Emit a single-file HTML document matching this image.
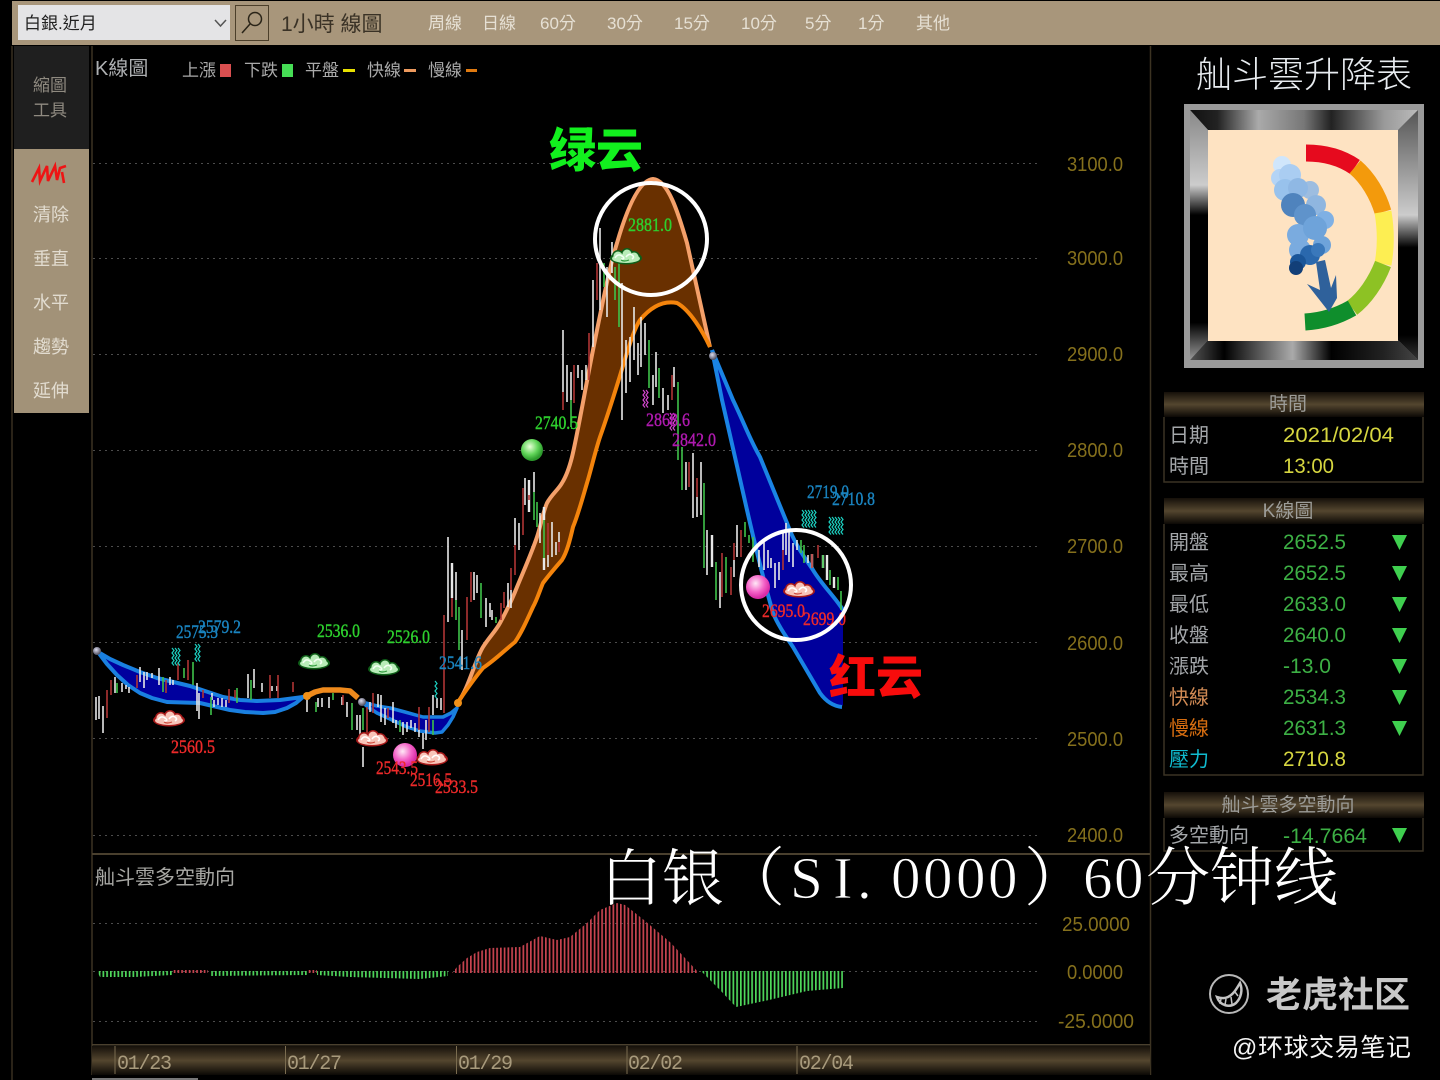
<!DOCTYPE html>
<html><head><meta charset="utf-8"><title>白银</title>
<style>
html,body{margin:0;padding:0;background:#000;width:1440px;height:1080px;overflow:hidden}
svg{display:block}
text{font-family:"Liberation Sans","Noto Sans CJK TC",sans-serif}
.a{fill:#85701c;font-size:20px}
.s{font-family:"Liberation Serif",serif;font-size:19px;stroke-width:.4px}
.l{font-size:20px;fill:#a4a7aa}
.v{font-size:21px;fill:#3db045}
.t{font-size:17px;fill:#e6e0d4}
.g{font-size:18px;fill:#e2dcd0}
.h{font-size:19px;fill:#9c9c98;text-anchor:middle}
.d{font-family:"Liberation Mono",monospace;font-size:20px;fill:#a89a7c}
</style></head><body>
<svg width="1440" height="1080" viewBox="0 0 1440 1080" xmlns="http://www.w3.org/2000/svg">
<defs>
<linearGradient id="hd" x1="0" y1="0" x2="0" y2="1"><stop offset="0" stop-color="#15100a"/><stop offset=".5" stop-color="#54462f"/><stop offset="1" stop-color="#0c0905"/></linearGradient>
<linearGradient id="ft" x1="0" y1="0" x2="1" y2="0"><stop offset="0" stop-color="#111"/><stop offset=".12" stop-color="#222"/><stop offset=".3" stop-color="#aaa"/><stop offset=".5" stop-color="#777"/><stop offset=".62" stop-color="#222"/><stop offset=".85" stop-color="#999"/><stop offset="1" stop-color="#bbb"/></linearGradient>
<linearGradient id="fb" x1="0" y1="0" x2="1" y2="0"><stop offset="0" stop-color="#555"/><stop offset=".15" stop-color="#000"/><stop offset=".45" stop-color="#aaa"/><stop offset=".62" stop-color="#000"/><stop offset=".85" stop-color="#222"/><stop offset="1" stop-color="#444"/></linearGradient>
<linearGradient id="fl" x1="0" y1="0" x2="0" y2="1"><stop offset="0" stop-color="#888"/><stop offset=".3" stop-color="#ccc"/><stop offset=".42" stop-color="#000"/><stop offset=".85" stop-color="#000"/><stop offset="1" stop-color="#999"/></linearGradient>
<linearGradient id="fr" x1="0" y1="0" x2="0" y2="1"><stop offset="0" stop-color="#555"/><stop offset=".42" stop-color="#ccc"/><stop offset=".55" stop-color="#000"/><stop offset=".9" stop-color="#000"/><stop offset="1" stop-color="#333"/></linearGradient>
<radialGradient id="bg" cx=".4" cy=".35" r=".6"><stop offset="0" stop-color="#e8ffd8"/><stop offset=".6" stop-color="#62d65a"/><stop offset="1" stop-color="#2c9a2c"/></radialGradient>
<radialGradient id="bp" cx=".4" cy=".35" r=".6"><stop offset="0" stop-color="#ffe8f6"/><stop offset=".6" stop-color="#f464c8"/><stop offset="1" stop-color="#d92ca6"/></radialGradient>
<radialGradient id="bs" cx=".4" cy=".35" r=".6"><stop offset="0" stop-color="#dde"/><stop offset="1" stop-color="#556"/></radialGradient>
<pattern id="hr" patternUnits="userSpaceOnUse" width="3.75" height="300" x="95"><rect width="1.7" height="300" fill="#c84450"/></pattern>
<pattern id="hg" patternUnits="userSpaceOnUse" width="3.75" height="300" x="95"><rect width="1.7" height="300" fill="#4fd85c"/></pattern>
<g id="cr"><g fill="#a81a1a"><ellipse cx="0" cy="1" rx="16" ry="6.500"/><circle cx="-8" cy="-1" r="6"/><circle cx="1" cy="-3" r="6"/><circle cx="8" cy="0" r="6"/></g><g fill="#f8c4b8"><ellipse cx="0" cy="1.500" rx="14" ry="4.500"/><circle cx="-8" cy="-1" r="4.500"/><circle cx="1" cy="-3" r="4.500"/><circle cx="8" cy="0" r="4.500"/></g><path d="M-11 1q3-5 7-2t-1 3M0 0q3-4 6-2t0 4" stroke="#fff" stroke-width="1.600" fill="none"/><path d="M-5 3q3 2 8 0" stroke="#d04a3c" stroke-width="1.200" fill="none"/></g>
<g id="cg"><g fill="#0e5e18"><ellipse cx="0" cy="1" rx="16" ry="6.500"/><circle cx="-8" cy="-1" r="6"/><circle cx="1" cy="-3" r="6"/><circle cx="8" cy="0" r="6"/></g><g fill="#b8ecb8"><ellipse cx="0" cy="1.500" rx="14" ry="4.500"/><circle cx="-8" cy="-1" r="4.500"/><circle cx="1" cy="-3" r="4.500"/><circle cx="8" cy="0" r="4.500"/></g><path d="M-11 1q3-5 7-2t-1 3M0 0q3-4 6-2t0 4" stroke="#f4fff4" stroke-width="1.600" fill="none"/><path d="M-5 3q3 2 8 0" stroke="#2e9a3c" stroke-width="1.200" fill="none"/></g>
<path id="wv" d="M0 0l2 2.500-2 2.500 2 2.500-2 2.500 2 2.500-2 2.500 2 2.500" fill="none" stroke-width="1.200"/>
</defs>

<rect width="1440" height="1080" fill="#000"/>

<!-- top bar -->
<rect x="12" y="1" width="1428" height="44" fill="#a8967b"/>
<rect x="18" y="5" width="212" height="35" fill="#e4e4e6"/>
<text x="24" y="29" font-size="17" fill="#222">白銀.近月</text>
<path d="M215 20l5.500 6 5.500-6" fill="none" stroke="#555" stroke-width="1.500"/>
<rect x="235.500" y="5.500" width="33" height="35" fill="#a8967b" stroke="#4c3f2a"/>
<circle cx="255" cy="19" r="6.500" fill="none" stroke="#2a2418" stroke-width="1.500"/>
<path d="M250 24l-8 9" stroke="#2a2418" stroke-width="1.500"/>
<text x="281" y="31" font-size="21" fill="#3a3226">1小時 線圖</text>
<text class="t" x="428" y="29">周線</text><text class="t" x="482" y="29">日線</text><text class="t" x="540" y="29">60分</text><text class="t" x="607" y="29">30分</text><text class="t" x="674" y="29">15分</text><text class="t" x="741" y="29">10分</text><text class="t" x="805" y="29">5分</text><text class="t" x="858" y="29">1分</text><text class="t" x="916" y="29">其他</text>

<!-- left tool panel -->
<rect x="14" y="46" width="75" height="103" fill="#1f1f1f"/>
<rect x="14" y="149" width="75" height="264" fill="#a29278"/>
<rect x="11" y="46" width="2" height="1034" fill="#2a2318"/>
<text x="33" y="91" font-size="17" fill="#8f8a80">縮圖</text>
<text x="33" y="116" font-size="17" fill="#8f8a80">工具</text>
<path d="M32 182L39 168 40 181 47 166 48 181 55 166 57 180 60 168 66 166M62 172L64 183" fill="none" stroke="#ee1414" stroke-width="2.600"/>
<text class="g" x="33" y="221">清除</text><text class="g" x="33" y="265">垂直</text><text class="g" x="33" y="309">水平</text><text class="g" x="33" y="353">趨勢</text><text class="g" x="33" y="397">延伸</text>

<!-- chart frame -->
<path d="M92 46V1075M1150.500 46V1075" stroke="#3c3322" stroke-width="1.500"/>
<path d="M93 163.500H1040M93 258.500H1040M93 354.500H1040M93 450.500H1040M93 546.500H1040M93 642.500H1040M93 738.500H1040M93 835.500H1040M93 923.500H1040M93 971.500H1040M93 1021.500H1040" stroke="#4c4c4c" stroke-dasharray="2 4"/>
<rect x="92" y="853" width="1058" height="2" fill="#4a402e"/>

<!-- legend -->
<text x="95" y="75" font-size="20" fill="#aeb0b2">K線圖</text>
<text class="t" x="182" y="76" style="fill:#aaa">上漲</text><rect x="220" y="64" width="11" height="13" fill="#d94f50"/>
<text class="t" x="244" y="76" style="fill:#aaa">下跌</text><rect x="282" y="64" width="11" height="13" fill="#46dd55"/>
<text class="t" x="305" y="76" style="fill:#aaa">平盤</text><rect x="343" y="69" width="12" height="3" fill="#e8e000"/>
<text class="t" x="367" y="76" style="fill:#aaa">快線</text><rect x="404" y="69" width="12" height="3" fill="#ee9a5e"/>
<text class="t" x="428" y="76" style="fill:#aaa">慢線</text><rect x="466" y="69" width="11" height="3" fill="#e07a10"/>

<!-- clouds ribbons -->
<path d="M98 652L110 659 123 665 140 672 157 678 190 686 223 697 240 700 257 701 280 700 303 697 296 703 287 708 275 712 263 713 245 712 230 710 200 703 167 702 152 698 140 693 128 685 117 675 107 664Z" fill="#00009e" stroke="#1a80e0" stroke-width="4" stroke-linejoin="round"/>
<path d="M307 696L315 692 323 690 340 690 350 691 358 698" fill="none" stroke="#ef8a1c" stroke-width="5.500" stroke-linejoin="round"/>
<path d="M362 702L377 706 390 708 405 712 423 717 443 717 451 713 457 708 453 717 448 725 442 732 435 733 420 731 407 727 390 719 377 713 368 707Z" fill="#00009e" stroke="#1a80e0" stroke-width="3.500" stroke-linejoin="round"/>
<path d="M458 702C468 690 475 660 483 647 490 636 495 632 500 623 507 610 512 600 517 587 524 570 532 552 537 537 541 525 543 512 547 503 552 494 558 490 562 483 567 475 570 465 572 457 577 437 585 390 593 350 602 305 610 265 617 243 628 205 640 180 653 179 668 180 678 212 687 243L710 347C703 332 690 310 677 303 662 300 650 308 640 320 630 335 622 375 600 437 595 452 591 470 587 483 582 500 578 515 573 527 570 540 567 552 562 560 555 568 549 575 543 583 540 590 537 600 533 607 527 620 522 632 515 642 505 650 495 660 483 668 473 680 465 692 458 702Z" fill="#693000"/>
<path d="M458 702C468 690 475 660 483 647 490 636 495 632 500 623 507 610 512 600 517 587 524 570 532 552 537 537 541 525 543 512 547 503 552 494 558 490 562 483 567 475 570 465 572 457 577 437 585 390 593 350 602 305 610 265 617 243 628 205 640 180 653 179 668 180 678 212 687 243L710 347" fill="none" stroke="#f4a06a" stroke-width="4"/>
<path d="M458 702C465 692 473 680 483 668 495 660 505 650 515 642 522 632 527 620 533 607 537 600 540 590 543 583 549 575 555 568 562 560 567 552 570 540 573 527 578 515 582 500 587 483 591 470 595 452 600 437 622 375 630 335 640 320 650 308 662 300 677 303 690 310 703 332 710 347" fill="none" stroke="#f4840c" stroke-width="4"/>
<path d="M712 350L733 400C745 425 750 440 760 457L787 523C795 545 805 558 813 570 822 585 835 597 843 610V705L840 707C832 706 825 700 820 693L793 647C785 635 778 625 773 613 765 585 755 545 747 510 738 470 730 435 722 400Z" fill="#00009c"/>
<path d="M712 350L733 400C745 425 750 440 760 457L787 523C795 545 805 558 813 570 822 585 835 597 843 610M712 350L722 400C730 435 738 470 747 510 755 545 765 585 773 613 778 625 785 635 793 647L820 693C825 700 832 706 842 707" fill="none" stroke="#1a84e4" stroke-width="4"/>

<!-- candles -->
<path d="M96 697V720M99 696V719M103 706V733M115 677V693M122 683V692M126 685V689M129 687V693M140 667V682M144 672V688M147 672V680M152 673V678M159 668V685M170 677V685M173 680V685M197 683V711M199 693V719M212 693V700M214 700V707M218 698V705M222 698V707M226 700V707M248 674V698M254 669V688M262 683V692M272 686V691M277 686V691M307 697V712M318 698V707M322 698V707M329 697V708M342 697V705M347 702V717M357 715V730M360 715V735M363 747V767M370 702V712M378 694V707M381 695V722M385 708V725M393 702V723M396 720V728M403 722V735M407 722V732M411 720V728M415 723V732M419 729V737M423 733V749M426 720V740M433 695V715M437 698V708M441 698V710" stroke="#e6e6e6" stroke-width="1.600" fill="none"/>
<path d="M448 537V622M456 572V600M462 630V670M474 572V600M477 575V593M486 598V627M490 603V617M492 610V620M508 583V607M511 590V608M515 518V545M519 523V550M525 478V505M534 472V492M540 513V543M548 555V567M552 522V557M556 542V555M559 532V542M563 330V392M567 365V402M571 372V400M578 365V378M582 370V390M586 365V380M593 280V347M600 228V310M607 267V317M612 242V273M622 283V420M626 340V393M630 337V382M634 307V360M638 343V375M641 317V367M645 323V355M653 375V405M656 352V387M663 388V413M668 395V410M674 367V387M686 462V490M693 453V518M697 497V517M701 462V515M707 530V575M720 572V608M734 560V577M737 525V557M759 550V567M764 540V570M768 550V568M771 558V568M775 563V588M779 562V580M783 533V550M786 523V555M789 532V562M793 543V567M797 540V550M808 555V563" stroke="#e8e8e8" stroke-width="1.600" fill="none"/>
<path d="M452 563V598M529 480V512M544 507V520M544 558V570M712 535V567M834 577V588M827 555V580M823 555V568M812 554V568" stroke="#e8e8e8" stroke-width="2.400" fill="none"/>
<path d="M117 683V693M163 677V692M184 668V678M193 662V685M211 697V715M237 688V703M251 680V700M316 702V712M333 693V700M352 703V730M363 708V730M400 720V732M433 720V735M459 607V650M456 600V620M481 583V618M496 617V623M534 492V520M537 502V527M544 520V558M571 400V427M604 263V287M615 267V300M619 263V327M649 340V388M659 368V398M678 382V460M682 447V490M704 483V568M716 562V600M726 557V593M745 522V537M749 535V543M753 537V562M801 540V553M804 545V563M823 555V568M830 570V585M838 577V590M841 591V610" stroke="#3fc24a" stroke-width="1.600" fill="none"/>
<path d="M107 690V718M111 680V695M137 675V688M166 680V693M178 663V680M188 660V680M203 690V698M229 689V703M235 690V698M270 675V698M278 675V698M293 682V692M343 695V705M367 707V740M373 693V713M388 708V718M419 707V730M429 707V732M444 615V713M452 598V617M467 597V640M471 572V602M501 603V620M504 592V608M511 568V590M515 545V575M523 488V535M529 495V500M548 523V555M559 542V552M563 392V410M574 365V403M589 333V380M597 263V300M672 375V400M689 462V487M697 478V497M722 553V597M731 567V595M734 543V560M741 530V557M783 550V570M812 554V568M818 545V558" stroke="#b03434" stroke-width="1.600" fill="none"/>

<!-- marks -->
<g stroke="#1cd0c0"><use href="#wv" x="172" y="648"/><use href="#wv" x="175" y="648"/><use href="#wv" x="178" y="648"/><use href="#wv" x="195" y="644"/><use href="#wv" x="198" y="644"/><use href="#wv" x="435" y="681"/><use href="#wv" x="802" y="510"/><use href="#wv" x="805" y="510"/><use href="#wv" x="808" y="510"/><use href="#wv" x="811" y="510"/><use href="#wv" x="814" y="510"/><use href="#wv" x="829" y="517"/><use href="#wv" x="832" y="517"/><use href="#wv" x="835" y="517"/><use href="#wv" x="838" y="517"/><use href="#wv" x="841" y="517"/></g>
<g stroke="#d448d0"><use href="#wv" x="643" y="390"/><use href="#wv" x="646" y="390"/><use href="#wv" x="670" y="413"/><use href="#wv" x="673" y="413"/></g>

<!-- icons on chart -->
<use href="#cr" x="169" y="719"/><use href="#cr" x="372" y="739"/><use href="#cr" x="432" y="758"/><use href="#cr" x="799" y="590"/>
<use href="#cg" x="314" y="662"/><use href="#cg" x="384" y="668"/><use href="#cg" x="626" y="257"/>
<circle cx="532" cy="450" r="11" fill="url(#bg)"/><circle cx="405" cy="755" r="12" fill="url(#bp)"/><circle cx="758" cy="587" r="12" fill="url(#bp)"/>
<circle cx="97" cy="651" r="4" fill="url(#bs)"/><circle cx="362" cy="702" r="4" fill="url(#bs)"/><circle cx="713" cy="356" r="4" fill="url(#bs)"/>
<circle cx="307" cy="696" r="4" fill="#f09018"/><circle cx="458" cy="703" r="4" fill="#f09018"/>

<!-- chart labels -->
<g>
<text class="s" x="176" y="638" fill="#1a84c0" stroke="#1a84c0" textLength="42" lengthAdjust="spacingAndGlyphs">2575.3</text>
<text class="s" x="198" y="633" fill="#1a84c0" stroke="#1a84c0" textLength="43" lengthAdjust="spacingAndGlyphs">2579.2</text>
<text class="s" x="317" y="637" fill="#2ed02e" stroke="#2ed02e" textLength="43" lengthAdjust="spacingAndGlyphs">2536.0</text>
<text class="s" x="387" y="643" fill="#2ed02e" stroke="#2ed02e" textLength="43" lengthAdjust="spacingAndGlyphs">2526.0</text>
<text class="s" x="171" y="753" fill="#ee2a2a" stroke="#ee2a2a" textLength="44" lengthAdjust="spacingAndGlyphs">2560.5</text>
<text class="s" x="439" y="669" fill="#1a84c0" stroke="#1a84c0" textLength="43" lengthAdjust="spacingAndGlyphs">2541.6</text>
<text class="s" x="376" y="774" fill="#ee2a2a" stroke="#ee2a2a" textLength="42" lengthAdjust="spacingAndGlyphs">2543.5</text>
<text class="s" x="410" y="786" fill="#ee2a2a" stroke="#ee2a2a" textLength="42" lengthAdjust="spacingAndGlyphs">2516.5</text>
<text class="s" x="435" y="793" fill="#ee2a2a" stroke="#ee2a2a" textLength="43" lengthAdjust="spacingAndGlyphs">2533.5</text>
<text class="s" x="535" y="429" fill="#2ed02e" stroke="#2ed02e" textLength="43" lengthAdjust="spacingAndGlyphs">2740.5</text>
<text class="s" x="628" y="231" fill="#2ed02e" stroke="#2ed02e" textLength="44" lengthAdjust="spacingAndGlyphs">2881.0</text>
<text class="s" x="646" y="426" fill="#b01ab0" stroke="#b01ab0" textLength="44" lengthAdjust="spacingAndGlyphs">2868.6</text>
<text class="s" x="672" y="446" fill="#b01ab0" stroke="#b01ab0" textLength="44" lengthAdjust="spacingAndGlyphs">2842.0</text>
<text class="s" x="807" y="498" fill="#1a84c0" stroke="#1a84c0" textLength="42" lengthAdjust="spacingAndGlyphs">2719.0</text>
<text class="s" x="832" y="505" fill="#1a84c0" stroke="#1a84c0" textLength="43" lengthAdjust="spacingAndGlyphs">2710.8</text>
<text class="s" x="762" y="617" fill="#ee2a2a" stroke="#ee2a2a" textLength="43" lengthAdjust="spacingAndGlyphs">2695.0</text>
<text class="s" x="803" y="625" fill="#ee2a2a" stroke="#ee2a2a" textLength="43" lengthAdjust="spacingAndGlyphs">2699.0</text>
</g>

<circle cx="651" cy="239" r="56" fill="none" stroke="#fff" stroke-width="4"/>
<circle cx="796" cy="585" r="55" fill="none" stroke="#fff" stroke-width="4"/>
<text x="549" y="167" font-size="47" font-weight="900" fill="#12f01e" style="font-family:'Noto Sans CJK SC',sans-serif">绿云</text>
<text x="829" y="694" font-size="47" font-weight="900" fill="#f80c0c" style="font-family:'Noto Sans CJK SC',sans-serif">红云</text>

<!-- axis -->
<g>
<text class="a" x="1067" y="171" textLength="56" lengthAdjust="spacingAndGlyphs">3100.0</text>
<text class="a" x="1067" y="265" textLength="56" lengthAdjust="spacingAndGlyphs">3000.0</text>
<text class="a" x="1067" y="361" textLength="56" lengthAdjust="spacingAndGlyphs">2900.0</text>
<text class="a" x="1067" y="457" textLength="56" lengthAdjust="spacingAndGlyphs">2800.0</text>
<text class="a" x="1067" y="553" textLength="56" lengthAdjust="spacingAndGlyphs">2700.0</text>
<text class="a" x="1067" y="650" textLength="56" lengthAdjust="spacingAndGlyphs">2600.0</text>
<text class="a" x="1067" y="746" textLength="56" lengthAdjust="spacingAndGlyphs">2500.0</text>
<text class="a" x="1067" y="842" textLength="56" lengthAdjust="spacingAndGlyphs">2400.0</text>
<text class="a" x="1062" y="931" textLength="68" lengthAdjust="spacingAndGlyphs">25.0000</text>
<text class="a" x="1067" y="979" textLength="56" lengthAdjust="spacingAndGlyphs">0.0000</text>
<text class="a" x="1058" y="1028" textLength="76" lengthAdjust="spacingAndGlyphs">-25.0000</text>
</g>

<!-- indicator pane -->
<text x="95" y="884" font-size="20" fill="#a8a8a4">舢斗雲多空動向</text>
<path d="M452 973L457 967 467 958 477 952 490 948 520 947 540 936 557 940 570 937 587 923 600 910 617 903 625 905 644 920 671 943 698 972V973Z" fill="url(#hr)"/>
<path d="M701 971H843V988L807 991 769 1000 736 1007 720 990Z" fill="url(#hg)"/>
<path d="M97 971H172V975L135 977 100 977ZM210 971H307V975L210 976ZM317 971H448V976L420 979 350 977 317 975Z" fill="url(#hg)"/>
<path d="M173 970H208V973H173ZM307 970H317V973H307Z" fill="url(#hr)"/>

<!-- time axis -->
<rect x="92" y="1046" width="1058" height="29" fill="url(#hd)"/>
<rect x="92" y="1044" width="1058" height="1.500" fill="#4a402e"/>
<path d="M115 1046V1074M285.500 1046V1074M456.500 1046V1074M627 1046V1074M797 1046V1074" stroke="#7a6c50"/>
<text class="d" x="117" y="1069" textLength="55">01/23</text><text class="d" x="287" y="1069" textLength="55">01/27</text><text class="d" x="458" y="1069" textLength="55">01/29</text><text class="d" x="628" y="1069" textLength="55">02/02</text><text class="d" x="799" y="1069" textLength="55">02/04</text>
<rect x="92" y="1078" width="106" height="2" fill="#777"/>

<!-- right title + gauge -->
<text x="1196" y="87" font-size="36" fill="#e8ecf0" font-weight="300" textLength="216">舢斗雲升降表</text>
<rect x="1184" y="104" width="240" height="264" fill="#9a9a9a"/>
<polygon points="1190,110 1418,110 1398,130 1208,130" fill="url(#ft)"/>
<polygon points="1190,360 1418,360 1398,340 1208,340" fill="url(#fb)"/>
<polygon points="1190,110 1208,130 1208,340 1190,360" fill="url(#fl)"/>
<polygon points="1418,110 1398,130 1398,340 1418,360" fill="url(#fr)"/>
<rect x="1208" y="130" width="190" height="211" fill="#fee3c2"/>
<g fill="none" stroke-width="17">
<path d="M1306 153C1325 153 1342 158 1355 167" stroke="#e60a1e"/>
<path d="M1355 167C1368 178 1378 195 1383 212" stroke="#f39a0c"/>
<path d="M1383 212C1386 230 1386 248 1383 264" stroke="#fdee52"/>
<path d="M1383 264C1376 282 1365 298 1352 308" stroke="#8dc224"/>
<path d="M1352 308C1338 316 1322 321 1305 322" stroke="#0f8e2c"/>
</g>
<g>
<polygon points="1316,262 1325,260 1331,288 1336,275 1337,298 1329,312 1307,284 1320,290" fill="#2f619b"/>
<circle cx="1310" cy="190" r="9" fill="#9dbde0"/><circle cx="1316" cy="205" r="10" fill="#8fb6e0"/><circle cx="1325" cy="220" r="9" fill="#7fb0e4"/>
<circle cx="1282" cy="165" r="9" fill="#d0e6fb"/><circle cx="1280" cy="178" r="9" fill="#b4d4f5"/><circle cx="1290" cy="175" r="11" fill="#aacdf2"/><circle cx="1285" cy="190" r="11" fill="#98c2ec"/><circle cx="1298" cy="188" r="10" fill="#8fb8e4"/>
<circle cx="1293" cy="205" r="12" fill="#4f83bd"/><circle cx="1305" cy="215" r="11" fill="#5f93cb"/><circle cx="1298" cy="235" r="11" fill="#7aabdf"/><circle cx="1315" cy="228" r="12" fill="#6ea3da"/><circle cx="1300" cy="250" r="11" fill="#7aabdf"/><circle cx="1322" cy="245" r="9" fill="#6ea3da"/>
<circle cx="1310" cy="255" r="10" fill="#2a68ad"/><circle cx="1318" cy="250" r="7" fill="#3a78bb"/><circle cx="1298" cy="262" r="8" fill="#1a5598"/><circle cx="1296" cy="268" r="7" fill="#123f78"/>
</g>

<!-- right tables -->
<g fill="none" stroke="#3a3224" stroke-width="1.500">
<path d="M1164 417V482H1423V417"/><path d="M1164 524V775H1423V524"/><path d="M1164 818V851H1423V818"/>
</g>
<rect x="1164" y="392" width="260" height="25" fill="url(#hd)"/>
<rect x="1164" y="498" width="260" height="26" fill="url(#hd)"/>
<rect x="1164" y="792" width="260" height="26" fill="url(#hd)"/>
<text class="h" x="1288" y="410">時間</text><text class="h" x="1288" y="517">K線圖</text><text class="h" x="1288" y="811">舢斗雲多空動向</text>

<text class="l" x="1169" y="442">日期</text><text class="l" x="1169" y="473">時間</text>
<text class="v" x="1283" y="442" style="fill:#d6d640" textLength="111" lengthAdjust="spacingAndGlyphs">2021/02/04</text>
<text class="v" x="1283" y="473" style="fill:#d6d640" textLength="51" lengthAdjust="spacingAndGlyphs">13:00</text>

<text class="l" x="1169" y="549">開盤</text><text class="l" x="1169" y="580">最高</text><text class="l" x="1169" y="611">最低</text><text class="l" x="1169" y="642">收盤</text><text class="l" x="1169" y="673">漲跌</text>
<text class="l" x="1169" y="704" style="fill:#d08a54">快線</text><text class="l" x="1169" y="735" style="fill:#d86e10">慢線</text><text class="l" x="1169" y="766" style="fill:#10bcd0">壓力</text>
<text class="v" x="1283" y="549" textLength="63" lengthAdjust="spacingAndGlyphs">2652.5</text>
<text class="v" x="1283" y="580" textLength="63" lengthAdjust="spacingAndGlyphs">2652.5</text>
<text class="v" x="1283" y="611" textLength="63" lengthAdjust="spacingAndGlyphs">2633.0</text>
<text class="v" x="1283" y="642" textLength="63" lengthAdjust="spacingAndGlyphs">2640.0</text>
<text class="v" x="1283" y="673" textLength="48" lengthAdjust="spacingAndGlyphs">-13.0</text>
<text class="v" x="1283" y="704" textLength="63" lengthAdjust="spacingAndGlyphs">2534.3</text>
<text class="v" x="1283" y="735" textLength="63" lengthAdjust="spacingAndGlyphs">2631.3</text>
<text class="v" x="1283" y="766" style="fill:#d6d640" textLength="63" lengthAdjust="spacingAndGlyphs">2710.8</text>
<text class="l" x="1169" y="842">多空動向</text>
<text class="v" x="1283" y="843" textLength="84" lengthAdjust="spacingAndGlyphs">-14.7664</text>
<path d="M1392 535h15l-7.500 15zM1392 566h15l-7.500 15zM1392 597h15l-7.500 15zM1392 628h15l-7.500 15zM1392 659h15l-7.500 15zM1392 690h15l-7.500 15zM1392 721h15l-7.500 15zM1392 828h15l-7.500 15z" fill="#3fcf4f"/>

<!-- overlay title -->
<g fill="#fff">
<text x="600" y="900" font-size="62" style="font-family:'Noto Serif CJK SC',serif;font-weight:300">白银</text>
<text x="721" y="900" font-size="64" style="font-family:'Noto Serif CJK SC',serif;font-weight:300">（</text>
<text x="790 833 857 891 923 956 988" y="898" font-size="59" stroke="#000" stroke-width=".8" style="font-family:'Liberation Serif',serif">SI.0000</text>
<text x="1024" y="900" font-size="64" style="font-family:'Noto Serif CJK SC',serif;font-weight:300">）</text>
<text x="1083 1114" y="898" font-size="59" stroke="#000" stroke-width=".8" style="font-family:'Liberation Serif',serif">60</text>
<text x="1146" y="900" font-size="64" style="font-family:'Noto Serif CJK SC',serif;font-weight:300">分钟线</text>
</g>

<!-- watermark -->
<circle cx="1229" cy="994" r="19" fill="none" stroke="#b8b8b8" stroke-width="2"/>
<path d="M1217 997C1220 1006 1230 1008 1236 1003 1241 998 1243 990 1240 983 1237 988 1234 994 1228 997 1224 999 1220 998 1217 997Z" fill="none" stroke="#c4c4c4" stroke-width="2.500"/>
<path d="M1221 999l-1 5M1226 999l-1 6M1231 997l1 7M1235 992l3 4" stroke="#c4c4c4" stroke-width="1.500"/>
<text x="1266" y="1007" font-size="36" font-weight="700" fill="#c8c8c8" style="font-family:'Noto Sans CJK SC',sans-serif">老虎社区</text>
<text x="1232" y="1056" font-size="25" fill="#f4f4f4" style="font-family:'Liberation Sans','Noto Sans CJK SC',sans-serif" textLength="179">@环球交易笔记</text>
</svg>
</body></html>
